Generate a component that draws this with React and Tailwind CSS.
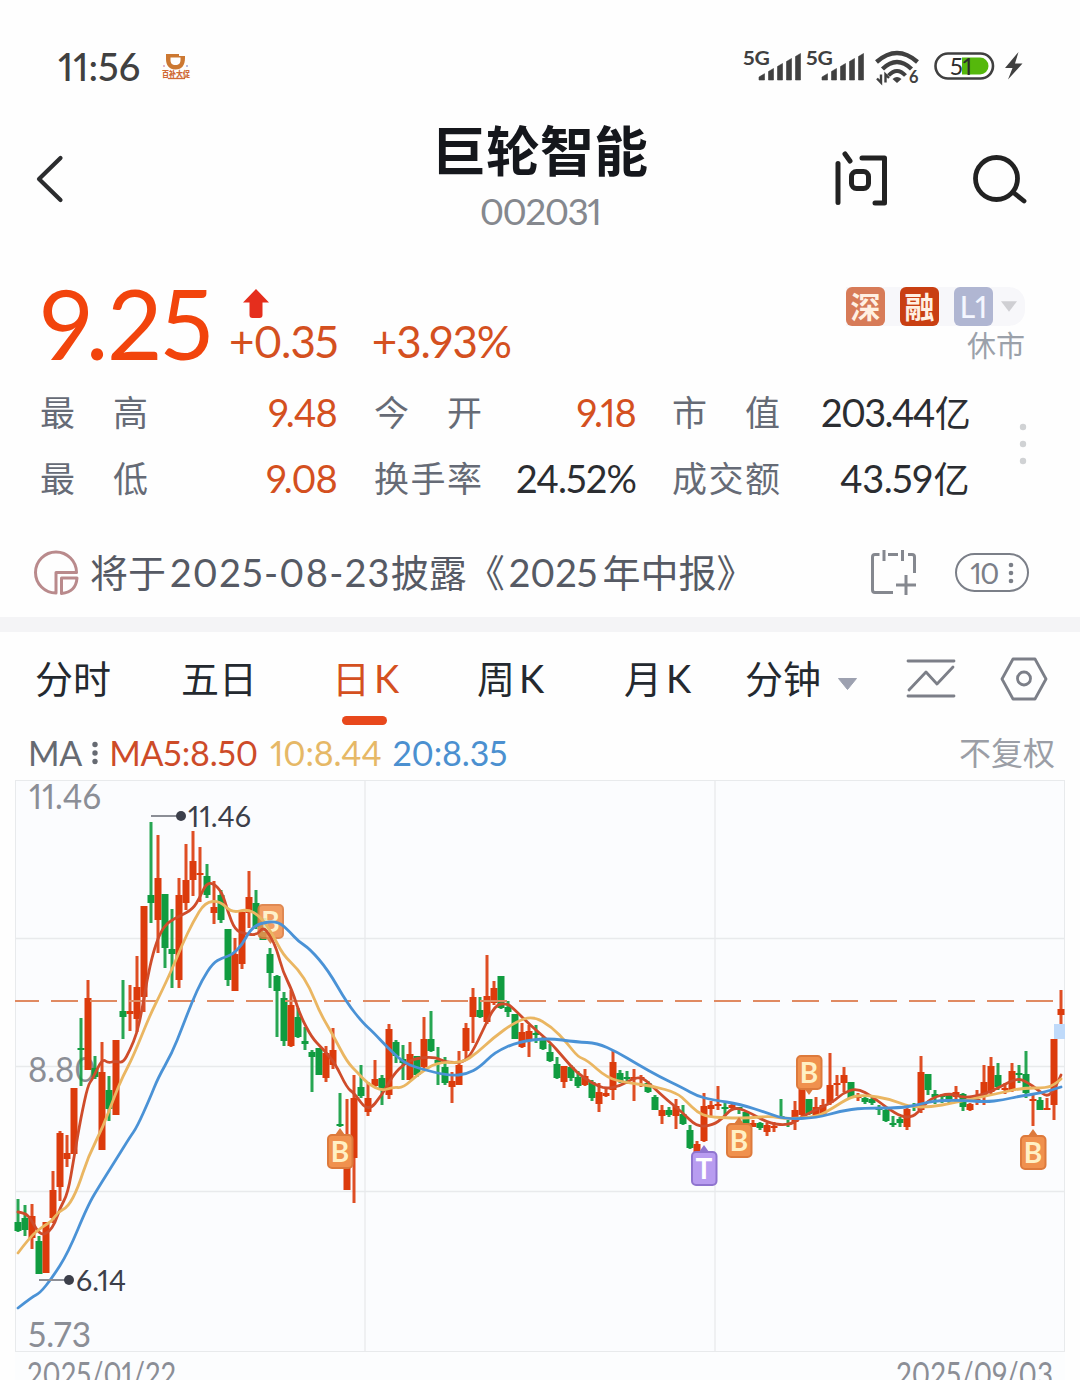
const UP = '#dc3b0c';
const DOWN = '#109c40';

// [direction, high, body top, body bottom, low], one entry for each trading day
const CANDLES = [
  ['d', 1199, 1222, 1231, 1232], ['d', 1205, 1218, 1230, 1236], ['u', 1204, 1216, 1238, 1249], ['d', 1236, 1241, 1274, 1274],
  ['u', 1222, 1222, 1273, 1273], ['u', 1171, 1190, 1218, 1223], ['u', 1131, 1133, 1187, 1201], ['u', 1135, 1153, 1159, 1167],
  ['u', 1088, 1088, 1154, 1154], ['d', 1018, 1048, 1050, 1086], ['u', 980, 998, 1070, 1070], ['d', 1056, 1068, 1077, 1079],
  ['u', 1042, 1072, 1150, 1150], ['d', 1076, 1090, 1109, 1121], ['u', 1040, 1040, 1115, 1115], ['d', 980, 1011, 1017, 1039],
  ['u', 985, 1011, 1014, 1031], ['u', 956, 987, 1019, 1032], ['u', 906, 906, 997, 1012], ['d', 822, 895, 903, 923],
  ['u', 835, 878, 920, 953], ['d', 894, 894, 948, 968], ['d', 909, 949, 954, 988], ['u', 878, 895, 980, 988],
  ['u', 844, 880, 903, 910], ['u', 831, 861, 880, 896], ['u', 847, 873, 875, 902], ['d', 864, 876, 895, 898],
  ['u', 881, 907, 913, 924], ['d', 890, 895, 920, 923], ['d', 929, 929, 980, 986], ['u', 938, 954, 991, 991],
  ['u', 912, 912, 964, 969], ['u', 871, 897, 913, 928], ['d', 890, 903, 927, 929], ['d', 918, 918, 940, 940],
  ['d', 948, 954, 973, 988], ['d', 975, 976, 991, 1037], ['d', 992, 998, 1041, 1046], ['u', 990, 1005, 1046, 1047],
  ['d', 1008, 1017, 1037, 1038], ['d', 1027, 1041, 1044, 1050], ['d', 1050, 1052, 1057, 1092], ['d', 1048, 1048, 1075, 1075],
  ['u', 1046, 1053, 1078, 1082], ['u', 1028, 1050, 1065, 1069], ['d', 1093, 1124, 1126, 1127], ['u', 1099, 1147, 1190, 1190],
  ['u', 1075, 1098, 1158, 1203], ['d', 1065, 1087, 1096, 1098], ['u', 1082, 1098, 1112, 1116], ['u', 1060, 1079, 1086, 1088],
  ['d', 1075, 1078, 1090, 1105], ['u', 1024, 1029, 1095, 1099], ['d', 1040, 1042, 1056, 1063], ['d', 1045, 1059, 1063, 1080],
  ['u', 1042, 1054, 1080, 1080], ['d', 1056, 1056, 1075, 1077], ['u', 1017, 1039, 1067, 1070], ['d', 1011, 1039, 1051, 1052],
  ['d', 1047, 1060, 1063, 1085], ['d', 1057, 1067, 1083, 1085], ['u', 1072, 1081, 1087, 1103], ['u', 1051, 1065, 1085, 1085],
  ['u', 1023, 1028, 1051, 1060], ['u', 988, 997, 1017, 1043], ['d', 997, 1010, 1017, 1018], ['u', 955, 996, 1022, 1024],
  ['u', 981, 988, 1003, 1005], ['d', 976, 976, 1008, 1009], ['d', 1001, 1007, 1012, 1017], ['d', 1014, 1014, 1039, 1039],
  ['u', 1023, 1032, 1047, 1048], ['u', 1025, 1031, 1041, 1057], ['d', 1025, 1033, 1035, 1043], ['d', 1037, 1039, 1049, 1050],
  ['d', 1044, 1052, 1061, 1062], ['d', 1057, 1064, 1078, 1079], ['u', 1066, 1066, 1082, 1088], ['d', 1065, 1067, 1078, 1081],
  ['d', 1071, 1077, 1086, 1088], ['u', 1069, 1076, 1085, 1086], ['d', 1080, 1082, 1098, 1101], ['u', 1083, 1092, 1104, 1112],
  ['u', 1088, 1093, 1096, 1097], ['u', 1051, 1062, 1090, 1100], ['d', 1070, 1073, 1081, 1083], ['d', 1071, 1077, 1078, 1084],
  ['u', 1069, 1077, 1078, 1101], ['u', 1075, 1077, 1078, 1087], ['d', 1081, 1083, 1092, 1093], ['d', 1095, 1097, 1110, 1110],
  ['u', 1105, 1110, 1116, 1124], ['d', 1107, 1110, 1115, 1117], ['u', 1099, 1106, 1116, 1129], ['d', 1105, 1114, 1124, 1125],
  ['d', 1125, 1130, 1148, 1149], ['u', 1141, 1144, 1153, 1153], ['u', 1093, 1106, 1141, 1142], ['u', 1101, 1105, 1109, 1116],
  ['u', 1086, 1104, 1106, 1110], ['d', 1103, 1107, 1109, 1116], ['u', 1103, 1105, 1108, 1110], ['d', 1107, 1107, 1110, 1114],
  ['d', 1112, 1112, 1124, 1124], ['u', 1120, 1123, 1127, 1127], ['d', 1122, 1123, 1128, 1130], ['u', 1123, 1125, 1132, 1136],
  ['u', 1122, 1126, 1128, 1132], ['d', 1099, 1116, 1118, 1118], ['d', 1120, 1123, 1125, 1127], ['u', 1101, 1110, 1122, 1130],
  ['u', 1087, 1087, 1115, 1117], ['d', 1099, 1099, 1114, 1115], ['u', 1097, 1107, 1115, 1116], ['u', 1099, 1105, 1115, 1116],
  ['u', 1053, 1085, 1103, 1105], ['u', 1075, 1083, 1085, 1096], ['u', 1067, 1075, 1083, 1092], ['d', 1082, 1082, 1098, 1098],
  ['u', 1093, 1095, 1098, 1101], ['d', 1097, 1098, 1102, 1104], ['d', 1098, 1099, 1103, 1105], ['d', 1105, 1107, 1110, 1115],
  ['d', 1109, 1110, 1121, 1122], ['d', 1116, 1123, 1125, 1127], ['d', 1117, 1119, 1123, 1127], ['u', 1107, 1109, 1127, 1130],
  ['d', 1103, 1105, 1107, 1111], ['u', 1056, 1072, 1110, 1113], ['d', 1074, 1074, 1090, 1095], ['d', 1090, 1094, 1097, 1104],
  ['d', 1094, 1095, 1097, 1103], ['d', 1093, 1095, 1099, 1103], ['u', 1086, 1092, 1097, 1103], ['d', 1093, 1094, 1107, 1111],
  ['u', 1103, 1104, 1110, 1111], ['u', 1090, 1099, 1101, 1105], ['u', 1065, 1082, 1097, 1105], ['u', 1057, 1066, 1092, 1094],
  ['d', 1063, 1075, 1087, 1090], ['u', 1083, 1088, 1090, 1094], ['u', 1063, 1071, 1091, 1092], ['d', 1065, 1073, 1075, 1083],
  ['d', 1051, 1074, 1093, 1098], ['u', 1095, 1099, 1101, 1126], ['d', 1097, 1100, 1110, 1110], ['u', 1098, 1108, 1110, 1110],
  ['u', 1039, 1039, 1105, 1120], ['u', 990, 1009, 1015, 1024],
];

const MA5 = '18,1212 25,1213 31,1219 36,1229 42,1235 49,1232 55,1223 60,1208 68,1193 74,1157 81,1117 88,1085 92,1080 97,1069 103,1059 108,1063 116,1061 123,1063 130,1050 137,1033 142,1010 147,980 153,953 160,933 168,922 180,916 193,909 200,897 206,884 213,883 222,892 228,912 235,930 245,934 257,935 263,927 270,935 277,950 283,972 292,990 300,1015 312,1038 322,1048 335,1063 347,1088 354,1093 368,1112 382,1095 393,1075 405,1063 417,1058 435,1057 445,1062 463,1063 472,1053 483,1030 495,1005 507,1003 515,1010 530,1025 550,1042 563,1057 577,1073 592,1083 605,1089 620,1086 632,1079 642,1077 653,1087 667,1100 682,1112 697,1127 713,1125 723,1118 733,1107 747,1111 770,1124 790,1125 800,1118 815,1110 833,1102 843,1093 857,1088 873,1097 887,1108 902,1117 913,1117 922,1108 931,1098 950,1093 963,1098 983,1095 1000,1087 1017,1078 1027,1082 1038,1090 1047,1097 1054,1090 1061,1075';
const MA10 = '18,1253 30,1237 42,1227 52,1221 58,1212 68,1207 78,1188 88,1157 103,1127 115,1095 123,1076 133,1057 150,1015 160,995 173,967 182,945 193,922 205,902 220,901 232,913 247,909 260,916 272,933 283,955 298,969 310,988 320,1013 333,1035 347,1062 358,1073 368,1084 382,1091 393,1087 403,1088 417,1075 437,1062 462,1063 477,1053 493,1038 515,1022 533,1016 552,1027 567,1043 578,1057 587,1060 607,1078 628,1083 653,1086 677,1093 687,1102 697,1112 708,1117 733,1118 750,1118 770,1116 787,1119 817,1117 833,1108 850,1097 865,1095 890,1099 910,1107 931,1107 953,1103 972,1099 1000,1093 1022,1088 1047,1088 1055,1084 1061,1079';
const MA20 = '18,1308 32,1297 40,1293 52,1278 68,1253 88,1205 100,1185 117,1158 130,1137 137,1127 150,1098 158,1078 172,1053 182,1028 192,1002 202,980 213,963 222,958 232,955 242,945 250,930 260,923 278,921 290,932 298,941 310,949 328,970 347,1003 363,1023 373,1032 387,1047 403,1062 417,1068 450,1076 467,1074 480,1067 495,1052 518,1042 547,1038 577,1042 597,1043 617,1052 637,1064 660,1077 683,1088 697,1096 713,1100 740,1104 770,1114 785,1119 817,1118 840,1111 863,1108 900,1108 917,1105 933,1101 960,1100 985,1102 1003,1100 1020,1096 1042,1093 1061,1087';

const MARKERS = [
  { x: 340, y: 1134, label: 'B', tip: 'up' },
  { x: 704, y: 1151, label: 'T', tip: 'up' },
  { x: 739, y: 1123, label: 'B', tip: 'up' },
  { x: 809, y: 1055, label: 'B', tip: 'down' },
  { x: 1033, y: 1135, label: 'B', tip: 'up' },
];

// rounds the corners of a polyline with quadratic segments through the midpoints
function smooth(points) {
  const p = points.split(' ').map((s) => s.split(',').map(Number));
  let d = `M${p[0][0]} ${p[0][1]}`;
  for (let i = 1; i < p.length - 1; i++) {
    d += `Q${p[i][0]} ${p[i][1]} ${(p[i][0] + p[i + 1][0]) / 2} ${(p[i][1] + p[i + 1][1]) / 2}`;
  }
  const last = p[p.length - 1];
  return `${d}L${last[0]} ${last[1]}`;
}

function Signal() {
  return (
    <svg className="overflow-visible" width="63" height="36" viewBox="0 0 63 36" fill="#404040">
      <text x="-1" y="16.500" fontSize="19.500" fontWeight="700" textLength="27" lengthAdjust="spacingAndGlyphs">5G</text>
      <path d="M15 32v-3l5.500-3.300v6.300zM24.500 32v-8.500l5-3v11.500zM33.500 32v-13.500l5-3v16.500zM42.500 32v-18.500l5-3v21.500zM51.500 32v-23.500l5-3v26.500z" stroke="#404040" strokeWidth="0.6" strokeLinejoin="round" />
    </svg>
  );
}

function Wifi() {
  return (
    <svg className="overflow-visible" width="46" height="36" viewBox="0 0 46 36" fill="none" stroke="#404040" strokeWidth="4.400">
      <path d="M1.500 14Q22 -4 42.500 14" />
      <path d="M7.500 21Q22 7 36.500 21" />
      <path d="M13.500 27.500Q22 18.500 30.500 27.500" strokeWidth="4" />
      <path d="M17.500 31Q22 27 26.500 31L22 35z" fill="#404040" stroke="none" />
      <path d="M6 26.500v8l-4-4M10.500 34.500v-8l3.500 3.500" strokeWidth="2.400" />
      <text x="34" y="35" fill="#404040" stroke="none" fontSize="16.500" fontWeight="700">6</text>
    </svg>
  );
}

function StatusBar() {
  return (
    <div className="flex h-[108px] items-center pt-6 pl-[58px] text-[#404040]">
      <span className="w-[103px] text-[38px] font-medium leading-none">11:56</span>
      <svg width="32" height="32" viewBox="0 0 32 32">
        <path d="M5 4h13v2h6v2c0 7-3 11.500-9.500 11.500S5 15 5 9zM9.500 7.500v2.500c0 3 1.500 5 5 5s5-2 5-5V7.500z" fill="#cc7832" fillRule="evenodd" />
        <circle cx="3" cy="16" r="1" fill="#d8a0c0" /><circle cx="26" cy="16" r="1" fill="#a0a8d8" />
        <text x="1" y="26.500" fontSize="7.500" fontWeight="900" fill="#d06a36" textLength="28" lengthAdjust="spacingAndGlyphs">百补大促</text>
        <path d="M7 28.500h17" stroke="#d06a36" strokeWidth="1.300" />
      </svg>
      <div className="ml-auto flex items-center pr-[56px]">
        <Signal />
        <Signal />
        <div className="ml-[5px]"><Wifi /></div>
        <svg className="ml-[13px]" width="62" height="28" viewBox="0 0 62 28">
          <rect x="1.500" y="1.500" width="57.500" height="25" rx="12.500" fill="#fff" stroke="#404040" strokeWidth="2.600" />
          <path d="M28 5.500h18a8.500 8.500 0 0 1 0 17H28z" fill="#55b80c" />
          <text x="16" y="22.500" fontSize="24" fill="#2c2c2c" textLength="22" lengthAdjust="spacingAndGlyphs">51</text>
        </svg>
        <svg className="ml-2" width="20" height="30" viewBox="0 0 20 30">
          <path d="M14.500 1L1 17h7.500L4 28.500 18.500 12.500h-7.500z" fill="#404040" />
        </svg>
      </div>
    </div>
  );
}

function Header() {
  return (
    <header className="grid h-[142px] grid-cols-[360px_1fr_360px] items-center">
      <svg className="ml-[35px]" width="30" height="50" viewBox="0 0 30 50" fill="none" stroke="#2b2c2e" strokeWidth="4.200" strokeLinecap="round" strokeLinejoin="round">
        <path d="M25.500 4L4 25 25.500 46" />
      </svg>
      <div className="-mt-[3px] flex flex-col items-center">
        <h1 className="text-[54px] leading-[60px] font-bold whitespace-nowrap text-[#15171c]">巨轮智能</h1>
        <span className="mt-[7px] text-[37px] leading-[44px] tracking-[-1.600px] text-[#85888e]">002031</span>
      </div>
      <div className="flex items-center justify-end pr-[52px] text-[#222]">
        <svg width="56" height="58" viewBox="0 0 56 58" fill="none" stroke="currentColor" strokeWidth="5" strokeLinecap="round" strokeLinejoin="round">
          <path d="M5 13.500v39M12 4l5 7M29 8h22.500v45H42" />
          <rect x="18.500" y="21.500" width="17" height="17" rx="5" />
        </svg>
        <svg className="ml-[83px]" width="56" height="58" viewBox="0 0 56 58" fill="none" stroke="currentColor" strokeWidth="4.800" strokeLinecap="round">
          <circle cx="24.500" cy="28.500" r="21" />
          <path d="M42 43l10 8" />
        </svg>
      </div>
    </header>
  );
}

function Label({ text }) {
  return (
    <span className="flex justify-between text-[35px] text-[#666b76]">
      {[...text].map((c, i) => <span key={i}>{c}</span>)}
    </span>
  );
}

function Quote() {
  return (
    <section className="text-[#2b2d31]">
      <div className="flex h-[130px] pr-[55px] pl-[40px]">
        <span className="w-[189px] pt-[19px] text-[96px] leading-[108px] tracking-[-1px] text-[#f2440c]">9.25</span>
        <div className="pt-[38px] text-[#d4501f]">
          <svg className="ml-[13px]" width="28" height="32" viewBox="0 0 28 32">
            <path d="M14 1L27 14.500H20.500V27q0 3-3 3h-7q-3 0-3-3V14.500H1z" fill="#e52e1d" />
          </svg>
          <div className="flex gap-[34px] text-[44px] leading-[42px] tracking-[-1px]">
            <span>+0.35</span>
            <span>+3.93%</span>
          </div>
        </div>
        <div className="ml-auto flex flex-col items-end pt-[37px]">
          <div className="flex items-center gap-[15px] rounded-r-2xl bg-[#f7f7fa] text-[30px] leading-[39px] font-bold text-[#fff0e2]">
            <span className="w-[39px] rounded-[6px] bg-[#d77b58] text-center">深</span>
            <span className="w-[39px] rounded-[6px] bg-[#c93f12] text-center">融</span>
            <div className="flex items-center">
              <span className="w-[39px] rounded-[6px] bg-[#b0b6d2] text-center font-medium text-[#f4f6ff]">L1</span>
              <svg className="mx-[8px]" width="16" height="11" viewBox="0 0 15 10"><path d="M0 0h15L7.500 10z" fill="#cfcfd3" /></svg>
            </div>
          </div>
          <span className="mt-[4px] text-[29px] leading-[32px] text-[#9ba1aa]">休市</span>
        </div>
      </div>
      <div className="flex h-[132px] pl-[40px]">
        <div className="-mt-[1px] grid auto-rows-[66px] grid-cols-[107px_190px_107px_155px_107px_190px] text-right text-[38px] leading-[66px] tracking-[-0.900px]">
          <Label text="最高" />
          <span className="text-[#d4501f]">9.48</span>
          <div className="-mr-[37px] ml-[37px]"><Label text="今开" /></div>
          <span className="-mr-[37px] ml-[37px] text-[#d4501f]">9.18</span>
          <div className="-mr-[73px] ml-[73px]"><Label text="市值" /></div>
          <span className="-mr-[73px] ml-[73px] tracking-[-1.700px]">203.44<span className="ml-px text-[36px]">亿</span></span>
          <Label text="最低" />
          <span className="text-[#d4501f]">9.08</span>
          <div className="-mr-[37px] ml-[37px]"><Label text="换手率" /></div>
          <span className="-mr-[37px] ml-[37px]">24.52%</span>
          <div className="-mr-[73px] ml-[73px]"><Label text="成交额" /></div>
          <span className="-mr-[73px] ml-[73px] tracking-[-0.500px]">43.59<span className="ml-px text-[36px]">亿</span></span>
        </div>
        <svg className="mt-[43px] ml-[123px]" width="8" height="42" fill="#d0d2d4">
          <circle cx="4" cy="4" r="3.200" /><circle cx="4" cy="21" r="3.200" /><circle cx="4" cy="38" r="3.200" />
        </svg>
      </div>
    </section>
  );
}

function Notice() {
  return (
    <div className="flex h-[105px] items-center pt-[16px] pr-[51px] pl-[34px] text-[#565a64]">
      <svg width="46" height="46" viewBox="0 0 46 46" fill="none" stroke="#b98a8c" strokeWidth="3" strokeLinejoin="round">
        <path d="M22 43A20.500 20.500 0 1 1 42.500 22.500H22z" />
        <path d="M27.500 28H43Q42 42 27.500 43.500z" />
      </svg>
      <p className="ml-[10px] flex text-[38px] whitespace-nowrap">
        <span>将于</span>
        <span className="ml-[4px] tracking-[1.300px]">2025-08-23</span>
        <span>披露《</span>
        <span className="ml-[4px]">2025</span>
        <span className="ml-[5px]">年中报》</span>
      </p>
      <svg className="ml-auto" width="48" height="48" viewBox="0 0 48 48" fill="none" stroke="#85888f" strokeWidth="3">
        <path d="M9.500 5.500H5q-2.500 0-2.500 2.500v33q0 2.500 2.500 2.500h18M18 5.500h10M38 5.500h4q2.500 0 2.500 2.500v16M14 1v11M32.500 1v11M26 36h20M36 26v20" />
      </svg>
      <div className="ml-[37px] flex h-[39px] w-[74px] items-center justify-center gap-[10px] rounded-full border-[2.500px] border-[#7b7f88] text-[29px] tracking-[-1.500px] text-[#7b7f88]">
        10
        <svg width="6" height="22" fill="#7b7f88"><circle cx="3" cy="3" r="2.300" /><circle cx="3" cy="11" r="2.300" /><circle cx="3" cy="19" r="2.300" /></svg>
      </div>
    </div>
  );
}

function Tabs() {
  return (
    <nav className="flex h-[97px] items-start pl-[35px] text-[38px] leading-[92px] text-[#24292f]">
      <span className="w-[146px]">分时</span>
      <span className="w-[151px]">五日</span>
      <div className="relative w-[145px] text-[#d4501f]">
        日<span className="ml-[4px]">K</span>
        <span className="absolute top-[84px] left-[10px] h-[9px] w-[45px] rounded-full bg-[#e8481c]" />
      </div>
      <span className="w-[147px]">周<span className="ml-[4px]">K</span></span>
      <span className="w-[121px]">月<span className="ml-[4px]">K</span></span>
      <span>分钟</span>
      <svg className="mt-[46px] ml-[17px]" width="19" height="12" viewBox="0 0 19 12"><path d="M.5.5h18L9.500 11.500z" fill="#9da1b0" stroke="#9da1b0" strokeLinejoin="round" /></svg>
      <svg className="mt-[26px] ml-[49px]" width="50" height="41" viewBox="0 0 50 41" fill="none" stroke="#7c7f88" strokeWidth="2.800" strokeLinecap="round" strokeLinejoin="round">
        <path d="M2 3h46M2 38h46M3 32l17-18 11 12 16-17" />
      </svg>
      <svg className="mt-[24px] ml-[44px]" width="48" height="46" viewBox="0 0 48 46" fill="none" stroke="#7c7f88" strokeWidth="2.800" strokeLinejoin="round">
        <path d="M13 3h22l11 20-11 20H13L2 23z" />
        <circle cx="24" cy="22.500" r="6.500" />
      </svg>
    </nav>
  );
}

function Averages() {
  return (
    <div className="flex h-[51px] items-center pr-[25px] pb-[4px] pl-[28px] text-[34px] tracking-[-0.200px] text-[#666a72]">
      <span>MA</span>
      <svg className="ml-[10px]" width="6" height="24" fill="#666a72"><circle cx="3" cy="3.500" r="2.700" /><circle cx="3" cy="12" r="2.700" /><circle cx="3" cy="20.500" r="2.700" /></svg>
      <span className="ml-[11px] text-[#cd4b28]">MA5:8.50</span>
      <span className="ml-[12px] text-[#e6b866]">10:8.44</span>
      <span className="ml-[11px] text-[#4b90d0]">20:8.35</span>
      <span className="ml-auto text-[32px] tracking-normal text-[#9b9ea6]">不复权</span>
    </div>
  );
}

function Marker({ x, y, label, tip }) {
  const isT = label === 'T';
  const stroke = isT ? '#8f74cf' : '#dd7a3c';
  const fill = isT ? '#b89cf0' : '#f0914e';
  return (
    <g>
      <path d={tip === 'up' ? `M${x - 5} ${y + 1}l5-7 5 7z` : `M${x - 5} ${y + 33}l5 7 5-7z`} fill={stroke} />
      <rect x={x - 12} y={y + 1} width="24.500" height="33" rx="4" fill={fill} stroke={stroke} strokeWidth="2" />
      <text x={x} y={y + 27.500} textAnchor="middle" fontSize="28" fontWeight="700" fill={isT ? '#fff' : '#fff0c4'}>{label}</text>
    </g>
  );
}

function Chart() {
  return (
    <svg className="block" width="1080" height="600" viewBox="0 780 1080 600">
      <rect x="15.500" y="780.500" width="1049" height="571" fill="#fbfcfe" stroke="#e8eaec" />
      <rect x="15" y="1352" width="1050" height="30" fill="#fcfdfe" />
      <path d="M15 938.500h1050M15 1066.500h1050M15 1191.500h1050M365 781v570M715 781v570" stroke="#e8eaec" strokeWidth="1.300" />

      <g fill="#8b8e96" fontSize="34">
        <text x="29" y="809" textLength="72" lengthAdjust="spacingAndGlyphs">11.46</text>
        <text x="28" y="1082" textLength="68" lengthAdjust="spacingAndGlyphs">8.80</text>
        <text x="28" y="1347" textLength="63" lengthAdjust="spacingAndGlyphs">5.73</text>
        <text x="27" y="1387" textLength="149" lengthAdjust="spacingAndGlyphs">2025/01/22</text>
        <text x="896" y="1387" textLength="157" lengthAdjust="spacingAndGlyphs">2025/09/03</text>
      </g>

      {CANDLES.map(([dir, high, top, bottom, low], i) => {
        const x = 18 + i * 7;
        return (
          <g key={i} fill={dir === 'u' ? UP : DOWN}>
            <rect x={x - 1.5} y={high} width="3" height={low - high} opacity="0.9" />
            <rect x={x - 3.5} y={top} width="7" height={Math.max(bottom - top, 2)} />
          </g>
        );
      })}
      <rect x="1054" y="1024" width="11" height="15" fill="#bfdafa" />
      <path d="M15 1001h1038" stroke="#e08a62" strokeWidth="2" strokeDasharray="27 12" strokeDashoffset="3" />

      <g opacity="0.88">
        <Marker x={270.5} y={904} label="B" tip="down" />
      </g>

      <g fill="none" strokeWidth="2.800" strokeLinejoin="round" strokeLinecap="round">
        <path d={smooth(MA5)} stroke="#cf4c2b" />
        <path d={smooth(MA10)} stroke="#eab662" />
        <path d={smooth(MA20)} stroke="#4a92d6" />
      </g>

      {MARKERS.map((m) => <Marker key={m.x} {...m} />)}

      <g fill="#3c3f4a" fontSize="28.500">
        <path d="M151 816h27M39 1280h27" stroke="#8b8e96" strokeWidth="1.800" />
        <circle cx="181" cy="816" r="5" /><circle cx="69" cy="1280" r="5" />
        <text x="188" y="827" textLength="63" lengthAdjust="spacingAndGlyphs">11.46</text>
        <text x="76" y="1291" textLength="50" lengthAdjust="spacingAndGlyphs">6.14</text>
      </g>
    </svg>
  );
}

export default function App() {
  return (
    <div className="h-[1380px] w-[1080px] overflow-hidden bg-[#fefefe] font-['Lato','Noto_Sans_CJK_SC',sans-serif] proportional-nums">
      <StatusBar />
      <Header />
      <Quote />
      <Notice />
      <div className="h-[15px] bg-[#f4f4f6]" />
      <Tabs />
      <Averages />
      <Chart />
    </div>
  );
}
